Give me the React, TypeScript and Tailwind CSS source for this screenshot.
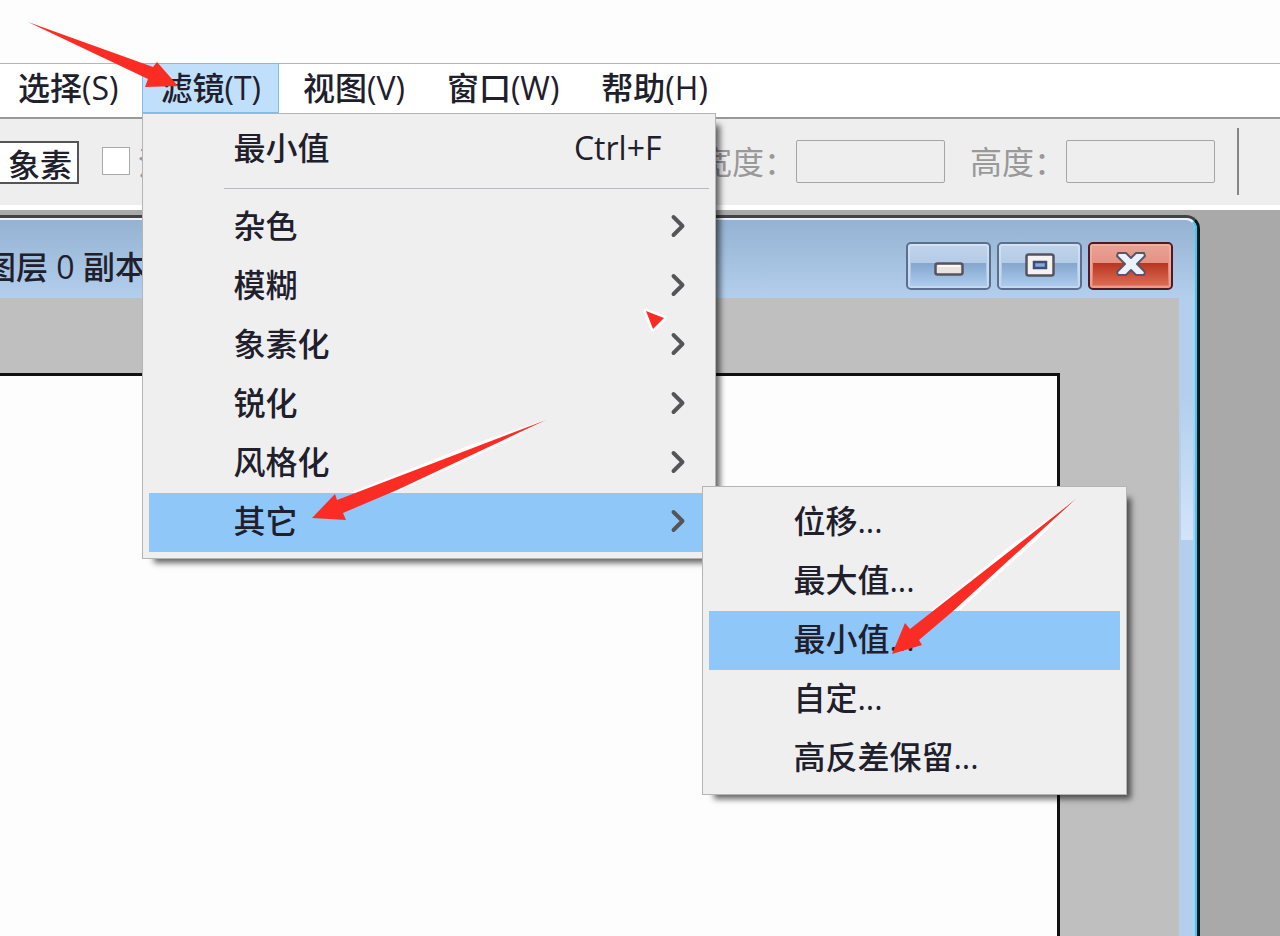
import { ChevronRight } from "lucide-react";

const menuBar = ["选择(S)", "滤镜(T)", "视图(V)", "窗口(W)", "帮助(H)"];
const filters = ["杂色", "模糊", "象素化", "锐化", "风格化", "其它"];
const others = ["位移...", "最大值...", "最小值...", "自定...", "高反差保留..."];

const panel =
  "absolute border border-[#b4b4b6] bg-[#efeff0] p-[6px] shadow-[8px_8px_6px_-4px_rgba(0,0,0,0.6)]";
const row = "flex h-[59px] w-full items-center pb-[3px] pl-[84px] text-left";
const captionButton =
  "relative flex h-12 w-[85px] items-center justify-center rounded-[5px] border-2";

function OtherMenu() {
  return (
    <ul className={`${panel} -top-[7px] left-full -ml-[7px] w-[425px]`}>
      {others.map((item) => (
        <li key={item}>
          <button
            className={`${row} ${item === "最小值..." ? "bg-[#8fc7f9]" : ""}`}
          >
            {item}
          </button>
        </li>
      ))}
    </ul>
  );
}

function FilterMenu() {
  return (
    <div className={`${panel} top-full left-0 z-20 w-[574px]`}>
      <button className={`${row} pr-12`}>
        <span className="flex-1">最小值</span>
        <span>Ctrl+F</span>
      </button>
      <hr className="mt-[9px] mb-[9px] ml-[75px] border-t border-[#b9b9c0]" />
      <ul>
        {filters.map((item) => (
          <li key={item} className="relative">
            <button
              className={`${row} pr-[13px] ${item === "其它" ? "bg-[#8fc7f9]" : ""}`}
            >
              <span className="flex-1">{item}</span>
              <ChevronRight size={36} strokeWidth={2.6} color="#555558" />
            </button>
            {item === "其它" && <OtherMenu />}
          </li>
        ))}
      </ul>
    </div>
  );
}

function MenuBar() {
  return (
    <nav className="-mt-px flex h-[50px] gap-[6px]">
      {menuBar.map((item) => (
        <div key={item} className="relative">
          <button
            className={`h-full border px-[17px] whitespace-nowrap ${
              item === "滤镜(T)"
                ? "border-[#7fbbe6] bg-[#bfdffb]"
                : "border-transparent"
            }`}
          >
            {item}
          </button>
          {item === "滤镜(T)" && <FilterMenu />}
        </div>
      ))}
    </nav>
  );
}

function OptionsBar() {
  return (
    <div className="flex h-[93px] items-start border-t-2 border-b-[5px] border-t-[#98989a] border-b-white bg-[#efeeef]">
      <input
        aria-label="象素"
        defaultValue="象素"
        className="mt-[22px] h-[43px] w-[79px] border-2 border-l-0 border-[#555] bg-white pl-2"
      />
      <input
        id="antialias"
        type="checkbox"
        className="mt-7 ml-[23px] size-7 appearance-none border border-[#a9a9ac] bg-white"
      />
      <label htmlFor="antialias" className="mt-6 ml-2 text-[#999]">
        消
      </label>
      <div className="mt-[21px] mr-[41px] ml-auto flex items-center font-normal text-[#999]">
        <label htmlFor="width">宽度：</label>
        <input
          id="width"
          disabled
          className="mr-[25px] h-[43px] w-[149px] rounded-[2px] border border-[#a5a5a7]"
        />
        <label htmlFor="height">高度：</label>
        <input
          id="height"
          disabled
          className="h-[43px] w-[149px] rounded-[2px] border border-[#a5a5a7]"
        />
        <div className="-my-3 ml-[22px] h-[67px] w-[2px] bg-[#858588]" />
      </div>
    </div>
  );
}

function CaptionButtons() {
  const blue =
    "border-[#5c6f8c] bg-linear-to-b from-[#c0d4ec] from-0% via-[#b3cbe6] via-46% to-[#abc8e8] to-100%";
  return (
    <div className="mt-[22px] mr-[6px] ml-auto flex gap-[6px]">
      <button aria-label="最小化" className={`${captionButton} ${blue}`}>
        <span className="absolute inset-x-[3px] top-[19px] bottom-[3px] bg-linear-to-b from-[#84a6cd] to-[#abcaec]" />
        <span className="absolute inset-0 rounded-[3px] border-2 border-white/30" />
        <svg width="30" height="14" className="relative mt-[6px]">
          <rect x="1.5" y="1.5" width="27" height="11" rx="2" fill="#e9e4df" stroke="#56545e" strokeWidth="2.5" />
          <path d="M4 4h22" stroke="#fbf8f5" strokeWidth="2" />
        </svg>
      </button>
      <button aria-label="最大化" className={`${captionButton} ${blue}`}>
        <span className="absolute inset-x-[3px] top-[19px] bottom-[3px] bg-linear-to-b from-[#84a6cd] to-[#abcaec]" />
        <span className="absolute inset-0 rounded-[3px] border-2 border-white/30" />
        <svg width="30" height="24" className="relative -mt-[3px]">
          <rect x="1.5" y="1.5" width="27" height="21" rx="2" fill="#f6f2ef" stroke="#56545e" strokeWidth="2.5" />
          <rect x="9" y="9" width="12" height="6" fill="#8ba9d3" stroke="#3c4e7c" strokeWidth="2.5" />
        </svg>
      </button>
      <button
        aria-label="关闭"
        className={`${captionButton} border-[#4a1b2a] bg-linear-to-b from-[#e9a397] to-[#df7a69]`}
      >
        <span className="absolute inset-x-[3px] top-[19px] bottom-[3px] bg-linear-to-b from-[#b83420] to-[#dc6a50]" />
        <span className="absolute inset-0 rounded-[3px] border-2 border-[#ffb9a5]/50" />
        <svg width="32" height="26" className="relative -mt-1">
          <path
            d="M3 2h8l5 5 5-5h8l1 3-8 8 8 8-1 3h-8l-5-5-5 5H3l-1-3 8-8-8-8z"
            fill="#eaf3fb"
            stroke="#5c5468"
            strokeWidth="2"
            strokeLinejoin="round"
          />
        </svg>
      </button>
    </div>
  );
}

function DocumentWindow() {
  return (
    <div className="mt-[5px] mr-20 flex flex-1 flex-col rounded-tr-[14px] border-t-[3px] border-r-[3px] border-t-[#434244] border-r-[#08161c] bg-[#b2cfed]">
      <div className="flex flex-1 flex-col rounded-tr-[11px] border-t-2 border-r-2 border-t-[#eaf4fd] border-r-[#35cdf0]">
        <header className="flex h-[78px] rounded-tr-[10px] bg-linear-to-b from-[#96b2d2] to-[#b3cfed] pr-4">
          <h1 className="mt-[27px] -ml-4 whitespace-nowrap">图层 0 副本</h1>
          <CaptionButtons />
        </header>
        <div className="flex flex-1">
          <main className="flex flex-1 bg-[#c0bfbf]">
            <div className="mt-[75px] mr-[119px] flex-1 border-t-[3px] border-r-[3px] border-[#111] bg-[#fdfdfd]" />
          </main>
          <div className="w-4 px-[2px]">
            <div className="h-[242px] bg-linear-to-b from-[#b2cfed] from-40% to-[#d3e4f8]" />
          </div>
        </div>
      </div>
    </div>
  );
}

function Arrows() {
  return (
    <svg
      aria-hidden="true"
      className="pointer-events-none absolute inset-0 z-30 h-full w-full"
    >
      <g fill="#fff">
        <path d="M545 420 473 444 350 493H394L450 468 510 440z" />
        <path d="M1076 500 1010 546 931 611H959L1000 573 1036 541z" />
        <path d="M646 311 664 318 653 329z" stroke="#fff" strokeWidth="5" strokeLinejoin="round" />
      </g>
      <g fill="#fb2c23">
        <path d="M28 22 153 67 157 62 178 86 145 87 148 79z" />
        <path d="M546 420 337 500 335 494 312 518 346 520 343 513 397 490z" />
        <path d="M1076 499 910 629 905 623 892 654 922 645 919 640 952 612z" />
        <path d="M646 311 664 318 653 329z" />
      </g>
    </svg>
  );
}

export default function App() {
  return (
    <div className="relative flex min-h-screen flex-col overflow-hidden bg-[#fdfdfd] font-['Open_Sans','Noto_Sans_CJK_SC',sans-serif] text-[32px] leading-10 font-medium text-[#20202c]">
      <div className="h-[63px]" />
      <div className="h-[54px] border-t border-[#b5b5b9] bg-white">
        <MenuBar />
      </div>
      <OptionsBar />
      <div className="flex flex-1 flex-col bg-[#a9a9a9]">
        <DocumentWindow />
      </div>
      <Arrows />
    </div>
  );
}
